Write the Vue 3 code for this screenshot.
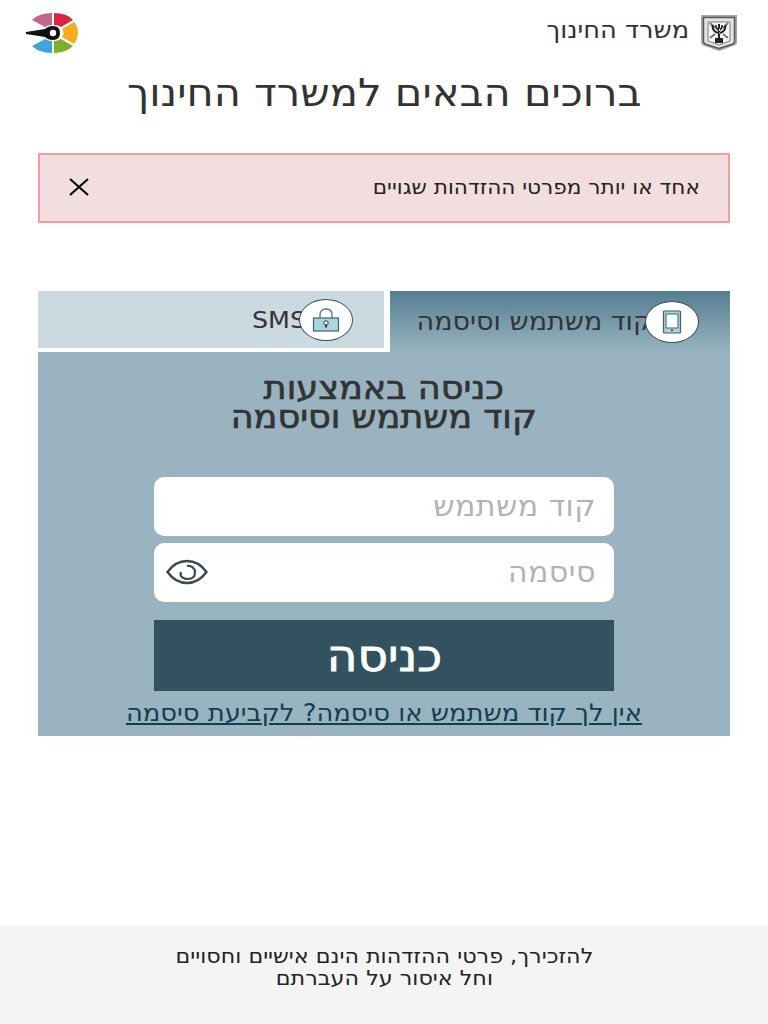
<template>
  <div class="page" dir="rtl">
    <header class="top-bar">
      <div class="ministry">
        <svg class="crest" viewBox="0 0 36 36" aria-hidden="true">
          <path d="M0 0h36v27q0 3-4 4l-14 5-14-5q-4-1-4-4z" fill="#a4a6a8" />
          <path d="M2.500 2.500h31v24q0 2-3 3l-12.500 4-12.500-4q-3-1-3-3z" fill="#e4e4e4" stroke="#55595c" stroke-width="1.500" />
          <path d="M7 7h22v19l-11 4-11-4z" fill="#f7f7f7" stroke="#77797b" />
          <path d="M9 8l5 5M27 8l-5 5M9 23l5-4M27 23l-5-4" stroke="#777" stroke-width="2" />
          <path d="M17 9h2v14h-2zM10.500 10h2q0 6 5 7v2q-7-1-7-9zM25.500 10h-2q0 6-5 7v2q7-1 7-9zM14 10h1.500q0 3 2.500 4v2q-4-1-4-6zM22 10h-1.500q0 3-2.500 4v2q4-1 4-6zM14 23h8v5h-8z" fill="#1f2326" />
        </svg>
        <span class="wide ministry-name">משרד החינוך</span>
      </div>
      <svg class="logo" viewBox="0 0 54 42" aria-hidden="true">
        <path d="M26 1v12q-4 0-7 2L6 8q7-7 20-7z" fill="#c4668c" />
        <path d="M28 1v12q4 0 7 2l12-7q-6-7-19-7z" fill="#d9263e" />
        <path d="M48 10q8 10 0 22l-12-7q3-4 0-8z" fill="#f8ad1e" />
        <path d="M35 27l12 7q-7 7-19 7V29q4 0 7-2z" fill="#7fb02b" />
        <path d="M26 29v12Q13 41 6 34l13-7q3 2 7 2z" fill="#3ea6dc" />
        <path d="M0 20l19-3q3-3 8-3 7 0 7 7t-7 7q-5 0-8-3L0 22z" fill="#111" />
        <circle cx="27" cy="21" r="3.200" fill="#fff" />
      </svg>
    </header>

    <h1 class="title"><span class="wide">ברוכים הבאים למשרד החינוך</span></h1>

    <div class="alert">
      <span class="wide alert-text">אחד או יותר מפרטי ההזדהות שגויים</span>
      <svg class="alert-close" viewBox="0 0 20 20" aria-hidden="true">
        <path d="M1 2l18 16M19 2L1 18" stroke="#000" stroke-width="2" fill="none" />
      </svg>
    </div>

    <section class="login">
      <div class="tabs">
        <div class="tab tab-active">
          <span class="tab-icon">
            <svg width="20" height="24" viewBox="0 0 20 24" aria-hidden="true">
              <rect x="1.500" y="1" width="17" height="22" rx="1" fill="#a9d5de" stroke="#44606c" stroke-width="1.200" />
              <rect x="4" y="4" width="12" height="14" fill="#fff" stroke="#44606c" />
              <rect x="9" y="19.500" width="2" height="1.500" fill="#333" />
            </svg>
          </span>
          <span class="wide tab-label">קוד משתמש וסיסמה</span>
        </div>
        <div class="tab tab-other">
          <span class="tab-icon">
            <svg width="28" height="24" viewBox="0 0 28 24" aria-hidden="true">
              <path d="M8 10V6.500C8 3 10.500 1 14 1s6 2 6 5.500V10" fill="none" stroke="#56717d" stroke-width="1.300" />
              <rect x="1.500" y="10" width="25" height="13" fill="#a9d5de" stroke="#44606c" stroke-width="1.200" />
              <circle cx="14" cy="15" r="2.200" fill="#fff" stroke="#333" />
              <rect x="13" y="16.500" width="2" height="3" fill="#333" />
            </svg>
          </span>
          <span class="wide tab-label">SMS</span>
        </div>
      </div>

      <h2 class="login-title"><span class="wide">כניסה באמצעות<br />קוד משתמש וסיסמה</span></h2>

      <form class="form" @submit.prevent>
        <input class="field" type="text" placeholder="קוד משתמש" />
        <div class="password">
          <input class="field" :type="showPassword ? 'text' : 'password'" placeholder="סיסמה" />
          <button class="eye" type="button" aria-label="הצג סיסמה" @click="showPassword = !showPassword">
            <svg width="42" height="26" viewBox="0 0 42 26" aria-hidden="true">
              <path d="M1.500 13C8 4 14 2 21 2s13 2 19.500 11C34 22 28 24 21 24S8 22 1.500 13z" fill="none" stroke="#3d4a52" stroke-width="2.500" />
              <path d="M15 13c-2 5 3 7 7 7 5 0 7-3 7-7 0-4-4-7-8-6" fill="none" stroke="#3d4a52" stroke-width="2.200" />
            </svg>
          </button>
        </div>
        <button class="submit" type="submit"><span class="wide">כניסה</span></button>
      </form>

      <a class="help-link wide" href="#">אין לך קוד משתמש או סיסמה? לקביעת סיסמה</a>
    </section>

    <footer class="footer"><span class="wide">להזכירך, פרטי ההזדהות הינם אישיים וחסויים<br />וחל איסור על העברתם</span></footer>
  </div>
</template>

<script setup>
import { ref } from 'vue';

const showPassword = ref(false);
</script>

<style>
body {
  background: #fff;
}
</style>

<style scoped>
.page {
  display: flex;
  flex-direction: column;
  min-height: 1024px;
  font-family: "DejaVu Sans", sans-serif;
  color: #333;
}

/* the reference text is wider than the font draws it */
.wide {
  display: inline-block;
  transform: scaleX(1.08);
}

.top-bar {
  display: flex;
  justify-content: space-between;
  align-items: flex-start;
  padding: 12px 31px 0 26px;
  height: 54px;
  box-sizing: border-box;
}

.ministry {
  display: flex;
  align-items: center;
  gap: 12px;
  font-size: 23.800px;
  line-height: 36px;
}

.ministry-name {
  margin-bottom: 6px;
  transform-origin: right center;
}

.crest {
  width: 36px;
  height: 36px;
}

.logo {
  width: 54px;
  height: 42px;
}

.title {
  margin: 16px 0 0;
  font-size: 38.500px;
  font-weight: 400;
  line-height: 46px;
  text-align: center;
}

.alert {
  display: flex;
  justify-content: space-between;
  align-items: center;
  margin: 37px 38px 0;
  height: 70px;
  padding: 0 28px 0 29px;
  box-sizing: border-box;
  background: #f2dede;
  border: 2px solid #f29ca6;
  color: #222;
  font-size: 20px;
}

.alert-text {
  margin-bottom: 3px;
  transform-origin: right center;
}

.alert-close {
  width: 20px;
  height: 20px;
  margin-bottom: 3px;
}

.login {
  display: flex;
  flex-direction: column;
  align-items: center;
  margin: 68px 38px 0;
  height: 445px;
  background: #99b4c0;
}

.tabs {
  display: grid;
  grid-template-columns: 340px 346px;
  gap: 6px;
  width: 100%;
  height: 61px;
  background: #fff;
}

.tab {
  display: flex;
  align-items: center;
  padding-right: 31px;
  font-size: 25px;
  box-sizing: border-box;
}

.tab-label {
  margin-right: -7px;
  transform-origin: right center;
}

.tab-active {
  background: linear-gradient(#557e92, #99b4c0);
}

.tab-other {
  background: #cbd9e1;
  border-bottom: 4px solid #fff;
  font-size: 23.500px;
}

.tab-icon {
  position: relative;
  z-index: 1;
  display: flex;
  justify-content: center;
  align-items: center;
  width: 54px;
  height: 42px;
  box-sizing: border-box;
  background: #fff;
  border: 1px solid #3c4a52;
  border-radius: 50%;
}

.login-title {
  margin: 22px 0 0;
  font-size: 32.500px;
  font-weight: 400;
  line-height: 29px;
  text-align: center;
  -webkit-text-stroke: 0.7px #333;
}

.form {
  display: flex;
  flex-direction: column;
  width: 460px;
  margin-top: 45px;
}

.field {
  display: block;
  width: 100%;
  height: 59px;
  padding: 0 18px 3px;
  box-sizing: border-box;
  border: 0;
  border-radius: 10px;
  background: #fff;
  color: #333;
  font-family: inherit;
  font-size: 30px;
  letter-spacing: 0.5px;
}

.field::placeholder {
  color: #b3b3b3;
}

.password {
  position: relative;
  margin-top: 7px;
}

.eye {
  position: absolute;
  left: 12px;
  top: 16px;
  padding: 0;
  border: 0;
  background: none;
  line-height: 0;
}

.submit {
  height: 71px;
  margin-top: 18px;
  border: 0;
  background: #32525f;
  color: #fff;
  font-family: inherit;
  font-size: 43.500px;
  -webkit-text-stroke: 0.8px #fff;
}

.help-link {
  margin-top: 7px;
  color: #123f4f;
  font-size: 23.900px;
  line-height: 30px;
}

.footer {
  margin-top: auto;
  height: 99px;
  padding-top: 20px;
  box-sizing: border-box;
  background: #f4f4f4;
  color: #222;
  font-size: 20.600px;
  line-height: 22px;
  text-align: center;
}
</style>
